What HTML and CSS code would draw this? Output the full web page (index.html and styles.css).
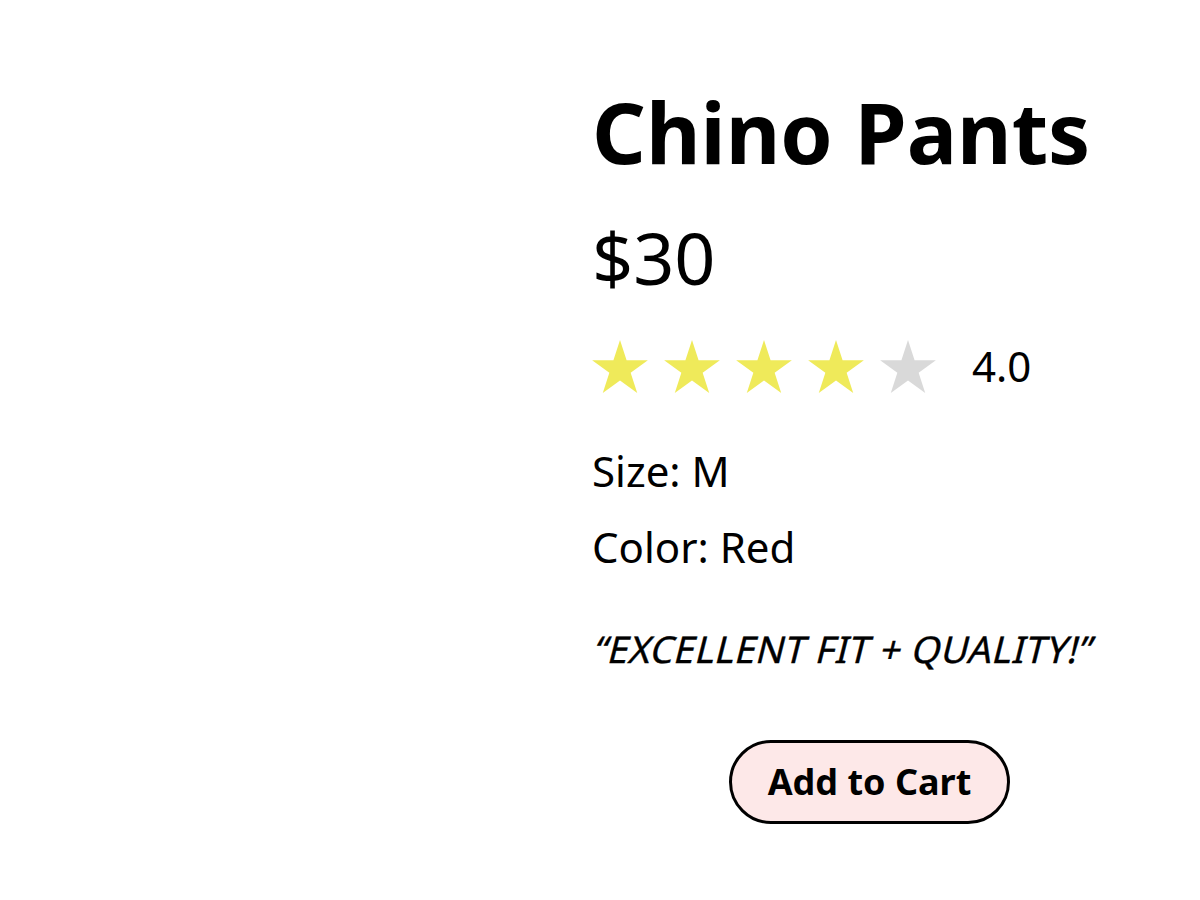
FILE: index.html
```html
<!DOCTYPE html>
<html lang="en">
<head>
<meta charset="utf-8">
<title>Chino Pants</title>
<link rel="stylesheet" href="styles.css">
</head>
<body>
<main class="product">
  <div class="media"></div>
  <section class="info">
    <h1 class="title">Chino Pants</h1>
    <p class="price">$30</p>
    <div class="rating">
      <svg class="star on" viewBox="2.45 0 95.1 90.45"><polygon points="50,0 61.23,34.55 97.55,34.55 68.16,55.9 79.39,90.45 50,69.1 20.61,90.45 31.84,55.9 2.45,34.55 38.77,34.55"/></svg>
      <svg class="star on" viewBox="2.45 0 95.1 90.45"><polygon points="50,0 61.23,34.55 97.55,34.55 68.16,55.9 79.39,90.45 50,69.1 20.61,90.45 31.84,55.9 2.45,34.55 38.77,34.55"/></svg>
      <svg class="star on" viewBox="2.45 0 95.1 90.45"><polygon points="50,0 61.23,34.55 97.55,34.55 68.16,55.9 79.39,90.45 50,69.1 20.61,90.45 31.84,55.9 2.45,34.55 38.77,34.55"/></svg>
      <svg class="star on" viewBox="2.45 0 95.1 90.45"><polygon points="50,0 61.23,34.55 97.55,34.55 68.16,55.9 79.39,90.45 50,69.1 20.61,90.45 31.84,55.9 2.45,34.55 38.77,34.55"/></svg>
      <svg class="star off" viewBox="2.45 0 95.1 90.45"><polygon points="50,0 61.23,34.55 97.55,34.55 68.16,55.9 79.39,90.45 50,69.1 20.61,90.45 31.84,55.9 2.45,34.55 38.77,34.55"/></svg>
      <span class="score">4.0</span>
    </div>
    <p class="attr attr-size">Size: M</p>
    <p class="attr attr-color">Color: Red</p>
    <p class="quote"><span class="quote-text">“EXCELLENT FIT + QUALITY!”</span></p>
    <div class="actions">
      <button class="cart-btn" type="button">Add to Cart</button>
    </div>
  </section>
</main>
</body>
</html>
```
FILE: styles.css
```css
html, body {
  margin: 0;
  padding: 0;
  background: #ffffff;
}

body {
  font-family: "Noto Sans", "Open Sans", sans-serif;
  color: #000000;
}

.product {
  display: flex;
  padding-top: 82px;
}

.media {
  width: 592px;
  flex: none;
}

.info {
  width: 555px;
  display: flex;
  flex-direction: column;
}

.title {
  margin: 0;
  font-size: 84px;
  font-weight: 700;
  line-height: 1.2;
}

.price {
  margin: 31px 0 0;
  font-size: 72px;
  font-weight: 400;
  line-height: 1.2;
}

.rating {
  margin-top: 40px;
  display: flex;
  align-items: center;
  gap: 16px;
}

.star {
  width: 56px;
  height: 53px;
  flex: none;
  display: block;
}

.star.on {
  fill: #efea5a;
}

.star.off {
  fill: #d9d9d9;
}

.score {
  margin-left: 20px;
  font-size: 42px;
  line-height: 1.2;
}

.attr {
  margin: 0;
  font-size: 42px;
  line-height: 1.2;
}

.attr-size {
  margin-top: 53px;
}

.attr-color {
  margin-top: 25px;
}

.quote {
  margin: 55px 0 0;
  font-size: 37px;
  font-weight: 400;
  line-height: 1.2;
}

.quote-text {
  display: inline-block;
  letter-spacing: 0.5px;
  -webkit-text-stroke: 0.4px #000000;
  transform: skewX(-14deg);
  transform-origin: 0 36.6px;
}

.actions {
  margin-top: 69px;
  display: flex;
  justify-content: center;
}

.cart-btn {
  font-family: inherit;
  font-size: 36px;
  font-weight: 700;
  line-height: 1.2;
  color: #000000;
  background: #fde8e8;
  border: 3px solid #000000;
  border-radius: 999px;
  padding: 17px 36px;
  cursor: pointer;
}
```
